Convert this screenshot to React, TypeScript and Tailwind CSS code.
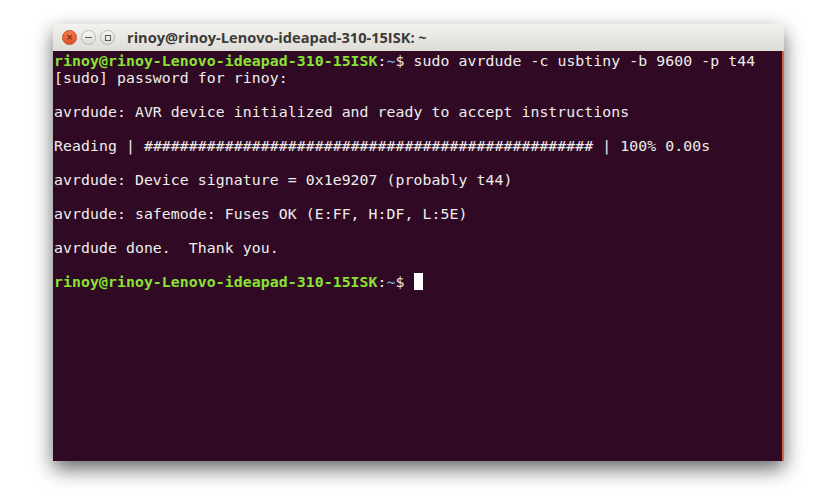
const Prompt = () => (
    <>
        <span className="font-bold text-[#8ae234]">rinoy@rinoy-Lenovo-ideapad-310-15ISK</span>
        <span className="text-[#eeeeec]">:</span>
        <span className="font-bold text-[#729fcf]">~</span>
        <span className="text-[#eeeeec]">$ </span>
    </>
)

const App = () => {
    const hashes = '#'.repeat(50)

    return (
        <div className="w-[830px] h-[504px] bg-[#ffffff] pl-[53px] pt-[24px] overflow-hidden">
            <div className="w-[731px] h-[437px] flex flex-col shadow-[0_8px_20px_rgba(0,0,0,0.6)] rounded-t-[5px]">
                {/* title bar */}
                <div className="h-[27px] rounded-t-[5px] bg-gradient-to-b from-[#f3f2ef] to-[#dedcd7] flex items-center pl-[9px] gap-[4px]">
                    <div className="w-[15px] h-[15px] rounded-full bg-gradient-to-b from-[#f27a52] to-[#e0532a] border border-[#c5491f] flex items-center justify-center text-[9px] leading-none text-[#7a2a10] font-bold" style={{ fontFamily: '"DejaVu Sans", sans-serif' }}>
                        ×
                    </div>
                    <div className="w-[15px] h-[15px] rounded-full bg-gradient-to-b from-[#f8f8f6] to-[#dcdad6] border border-[#b8b6b1] flex items-center justify-center">
                        <div className="w-[7px] h-[1px] bg-[#5d5d5a]" />
                    </div>
                    <div className="w-[15px] h-[15px] rounded-full bg-gradient-to-b from-[#f8f8f6] to-[#dcdad6] border border-[#b8b6b1] flex items-center justify-center">
                        <div className="w-[6px] h-[6px] border border-[#5d5d5a]" />
                    </div>
                    <span className="ml-[8px] text-[14.6px] font-bold text-[#3c3b37]" style={{ fontFamily: '"Open Sans", "Noto Sans", sans-serif' }}>
                        rinoy@rinoy-Lenovo-ideapad-310-15ISK: ~
                    </span>
                </div>

                {/* terminal */}
                <div
                    className="flex-1 bg-[#300a24] border-r-2 border-[#d9644a] pl-[1px] pt-[1px] text-[14.8px] leading-[17px] tracking-[0.08px] text-[#eeeeec] whitespace-pre"
                    style={{ fontFamily: '"DejaVu Sans Mono", "Liberation Mono", monospace' }}
                >
                    <div><Prompt />sudo avrdude -c usbtiny -b 9600 -p t44</div>
                    <div>[sudo] password for rinoy:</div>
                    <div> </div>
                    <div>avrdude: AVR device initialized and ready to accept instructions</div>
                    <div> </div>
                    <div>Reading | {hashes} | 100% 0.00s</div>
                    <div> </div>
                    <div>avrdude: Device signature = 0x1e9207 (probably t44)</div>
                    <div> </div>
                    <div>avrdude: safemode: Fuses OK (E:FF, H:DF, L:5E)</div>
                    <div> </div>
                    <div>avrdude done.  Thank you.</div>
                    <div> </div>
                    <div className="flex items-center">
                        <span><Prompt /></span>
                        <span className="inline-block w-[9px] h-[17px] bg-[#ffffff]" />
                    </div>
                </div>
            </div>
        </div>
    )
}

export default App
